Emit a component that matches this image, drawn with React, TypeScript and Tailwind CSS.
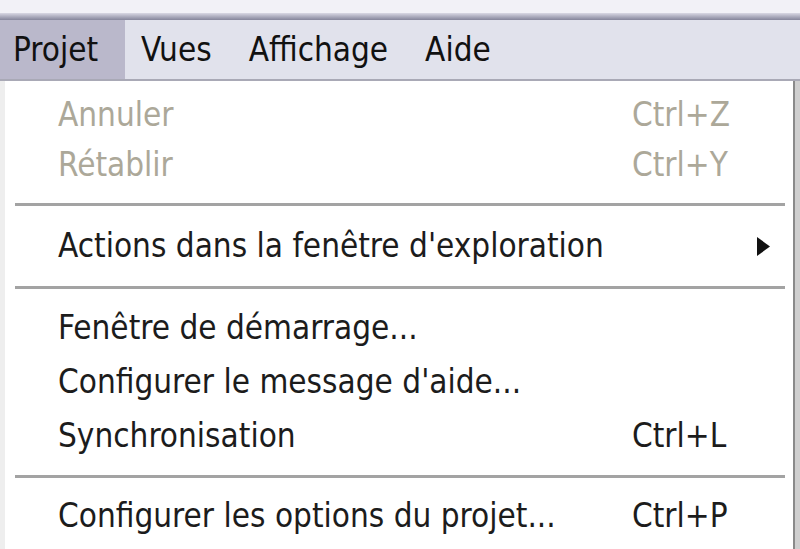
import React from "react";

type Item =
  | { kind: "sep"; h: string }
  | { kind: "item"; label: string; key?: string; disabled?: boolean; sub?: boolean; h: string };

const items: Item[] = [
  { kind: "item", label: "Annuler", key: "Ctrl+Z", disabled: true, h: "h-[52px]" },
  { kind: "item", label: "Rétablir", key: "Ctrl+Y", disabled: true, h: "h-[48px]" },
  { kind: "sep", h: "h-[30px]" },
  { kind: "item", label: "Actions dans la fenêtre d'exploration", sub: true, h: "h-[54px]" },
  { kind: "sep", h: "h-[28px]" },
  { kind: "item", label: "Fenêtre de démarrage...", h: "h-[54px]" },
  { kind: "item", label: "Configurer le message d'aide...", h: "h-[54px]" },
  { kind: "item", label: "Synchronisation", key: "Ctrl+L", h: "h-[54px]" },
  { kind: "sep", h: "h-[26px]" },
  { kind: "item", label: "Configurer les options du projet...", key: "Ctrl+P", h: "h-[54px]" },
];

function MenuRow({ item }: { item: Item }) {
  if (item.kind === "sep") {
    return (
      <div className={`${item.h} flex items-center pl-[10px] pr-[8px]`}>
        <div className="h-[3px] w-full bg-[#a3a3a3]" />
      </div>
    );
  }
  const color = item.disabled ? "text-[#aca899]" : "text-[#1c1c1c]";
  return (
    <div className={`${item.h} flex items-center ${color}`}>
      <span className="pl-[53px] flex-1 whitespace-nowrap">{item.label}</span>
      {item.key && <span className="w-[161px] whitespace-nowrap">{item.key}</span>}
      {item.sub && (
        <span className="w-[36px] flex items-center">
          <svg width="13" height="19" viewBox="0 0 13 19">
            <path d="M0 0 L13 9.5 L0 19 Z" fill="#111" />
          </svg>
        </span>
      )}
    </div>
  );
}

export default function App() {
  return (
    <div
      className="w-[800px] h-[549px] overflow-hidden flex flex-col bg-white text-[33px]"
      style={{ fontFamily: "Tahoma, 'DejaVu Sans Condensed', 'Liberation Sans', sans-serif" }}
    >
      {/* window top strip */}
      <div className="h-[13px] bg-[#f2f1f7]" />
      <div className="h-[7px] bg-gradient-to-b from-[#d9d8e4] to-[#85859b]" />

      {/* menubar */}
      <div className="h-[59px] bg-[#e1e2ec] flex items-center text-[#111]">
        <div className="h-full w-[125px] bg-[#bab8cb] flex items-center pl-[13px]">Projet</div>
        <div className="pl-[16px]">Vues</div>
        <div className="pl-[37px]">Affichage</div>
        <div className="pl-[37px]">Aide</div>
      </div>
      <div className="h-[2px] bg-[#a9a9b6]" />

      {/* dropdown */}
      <div className="flex-1 flex">
        <div className="w-[5px] bg-[#eeeeee]" />
        <div className="flex-1 bg-white pt-[8px]">
          {items.map((it, i) => (
            <MenuRow key={i} item={it} />
          ))}
        </div>
        <div className="w-[2px] bg-[#8a8a8a]" />
        <div className="w-[5px] bg-[#cfcfcf]" />
      </div>
    </div>
  );
}
